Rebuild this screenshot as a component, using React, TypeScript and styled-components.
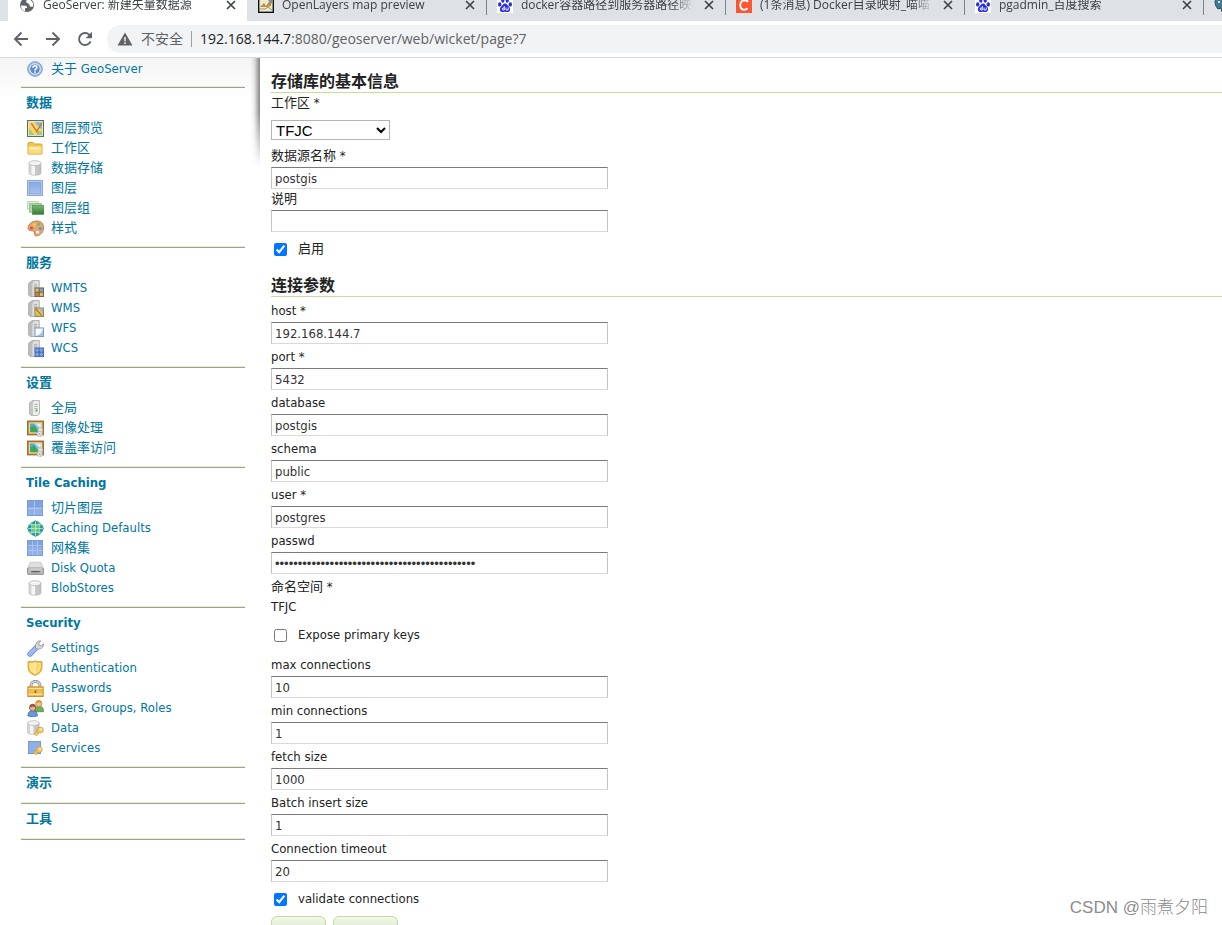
import React, { ReactNode, useId } from "react";
import styled, { createGlobalStyle } from "styled-components";

const pageFont = `"DejaVu Sans Condensed", "Noto Sans CJK SC", sans-serif`;
const chromeFont = `"Open Sans", "Noto Sans CJK SC", sans-serif`;

const GlobalStyle = createGlobalStyle`
  *, *::before, *::after { box-sizing: border-box; }
  body { margin: 0; background: #fff; }
`;

const Window = styled.div`
  position: relative;
  display: flex;
  flex-direction: column;
  height: 100vh;
  overflow: hidden;
  font: 13px/20px ${pageFont};
  color: #222;
`;

/* ---------- browser frame ---------- */

const TabStrip = styled.div`
  display: flex;
  align-items: flex-end;
  flex: none;
  height: 21px;
  padding-left: 8px;
  overflow: hidden;
  background: #dee1e6;
`;

const Tab = styled.div<{ $active?: boolean; $divided?: boolean }>`
  position: relative;
  display: flex;
  align-items: center;
  gap: 8px;
  flex: 0 0 239px;
  min-width: 0;
  height: 32px;
  padding: 0 8px 0 11px;
  background: ${(p) => (p.$active ? "#fff" : "transparent")};
  font: 12px/20px ${chromeFont};
  color: #3c4043;

  &::before {
    content: "";
    position: absolute;
    left: 0;
    top: 6px;
    width: 1px;
    height: 20px;
    background: ${(p) => (p.$divided ? "#808387" : "transparent")};
  }

  svg {
    flex: none;
  }
`;

const TabTitle = styled.span`
  flex: 1;
  min-width: 0;
  overflow: hidden;
  white-space: nowrap;
  mask-image: linear-gradient(90deg, #000 88%, transparent);
`;

const TabClose = styled.button`
  display: flex;
  align-items: center;
  justify-content: center;
  width: 16px;
  height: 16px;
  padding: 0;
  border: 0;
  background: none;
  color: #3c4043;
`;

const Toolbar = styled.div`
  display: flex;
  align-items: center;
  flex: none;
  height: 37px;
  padding-left: 13px;
  gap: 16px;
  background: #fff;
  border-bottom: 1px solid #d9dadc;
`;

const NavButton = styled.button`
  display: flex;
  width: 16px;
  height: 16px;
  padding: 0;
  border: 0;
  background: none;
  color: #5f6368;
`;

const AddressBar = styled.div`
  display: flex;
  align-items: center;
  flex: 1;
  height: 28px;
  margin-left: -2px;
  padding-left: 10px;
  gap: 8px;
  border-radius: 14px 0 0 14px;
  background: #f1f3f4;
  font: 14px/20px ${chromeFont};
  color: #5f6368;
  white-space: nowrap;
`;

const AddressDivider = styled.span`
  width: 1px;
  height: 16px;
  background: #9aa0a6;
`;

const Host = styled.span`
  color: #202124;
`;

/* ---------- page ---------- */

const Page = styled.div`
  display: flex;
  flex: 1;
  min-height: 0;
  background: linear-gradient(#f4f4f4, #fff 40px);
`;

const Sidebar = styled.nav`
  position: relative;
  flex: none;
  width: 260px;
  padding: 0 15px 0 21px;

  &::after {
    content: "";
    position: absolute;
    top: 0;
    right: 0;
    width: 10px;
    height: 108px;
    background: linear-gradient(90deg, transparent, #0001 40%, #0007);
    mask-image: linear-gradient(#000 50%, transparent);
  }
`;

const Section = styled.section<{ $collapsed?: boolean }>`
  padding: 5px 5px ${(p) => (p.$collapsed ? 10 : 9)}px;
  border-bottom: 1px solid #99a389;
  box-shadow: inset 0 -1px #e4efd6;
`;

const IntroSection = styled(Section)`
  padding-top: 1px;
  padding-bottom: 8px;
`;

const SectionTitle = styled.h2`
  margin: 0;
  font: bold 13px/20px ${pageFont};
  color: #0076a1;
`;

const Menu = styled.ul`
  margin: 0;
  padding: 5px 0 0;
  list-style: none;
`;

const IntroMenu = styled(Menu)`
  padding: 0;
`;

const MenuLink = styled.a`
  display: flex;
  align-items: center;
  gap: 7px;
  height: 20px;
  color: #0076a1;
  text-decoration: none;
  white-space: nowrap;
`;

const Main = styled.main`
  flex: 1;
  min-width: 0;
  padding: 4px 0 0 11px;
  background: #fff;
`;

const Legend = styled.h3`
  margin: 0;
  padding-top: 10px;
  border-bottom: 1px solid #c3df9b;
  font: bold 16px/20px ${pageFont};
  color: #222;
`;

const Field = styled.div<{ $gap?: number }>`
  display: flex;
  flex-direction: column;
  align-items: flex-start;
  padding-top: ${(p) => p.$gap ?? 3}px;
`;

const TextInput = styled.input`
  width: 337px;
  height: 22px;
  margin: 1px 0 0;
  padding: 0 3px;
  border: 1px solid #c4c4c4;
  border-top-color: #7a7a7a;
  border-bottom-color: #d9d9d9;
  background: #fff;
  font: 13px/20px ${pageFont};
  color: #333;

  &[type="password"] {
    font-family: "Liberation Sans", sans-serif;
  }
`;

const Select = styled.select`
  width: 119px;
  height: 20px;
  margin: 7px 0 0;
  padding: 0;
  border: 1px solid #b4b4b4;
  background: #fff;
  font: 15px "Liberation Sans", sans-serif;
  color: #000;
`;

const CheckRow = styled.div`
  display: flex;
  align-items: center;
  height: 34px;
  gap: 11px;
  padding-left: 3px;
`;

const CheckBox = styled.input`
  width: 13px;
  height: 13px;
  margin: 0;
  accent-color: #0075ff;
`;

const Value = styled.div`
  margin-bottom: 1px;
`;

const Actions = styled.div`
  display: flex;
  gap: 7px;
`;

const ActionButton = styled.button<{ $wide?: boolean }>`
  width: ${(p) => (p.$wide ? 65 : 55)}px;
  height: 26px;
  border: 1px solid #c0dc98;
  border-radius: 6px;
  background: linear-gradient(#f3f8ec, #c8e0a8);
`;

const Watermark = styled.div`
  position: absolute;
  right: 14px;
  bottom: 5px;
  font: 17px/24px "Liberation Sans", "Noto Sans CJK SC", sans-serif;
  font-weight: 300;
  color: #8c8c8c;
`;

/* ---------- icons ---------- */

const Svg = ({ children, size = 16 }: { children: ReactNode; size?: number }) => (
  <svg width={size} height={size} viewBox="0 0 16 16" aria-hidden="true">
    {children}
  </svg>
);

const MenuIconBox = styled.span`
  display: flex;
  flex: none;
  justify-content: center;
  width: 18px;
`;

const Gradient = ({ id, from, to, flat }: { id: string; from: string; to: string; flat?: boolean }) => (
  <linearGradient id={id} x1="0" y1="0" x2={flat ? "1" : "0"} y2={flat ? "0" : "1"}>
    <stop offset="0" stopColor={from} />
    <stop offset="1" stopColor={to} />
  </linearGradient>
);

const HelpIcon = () => (
  <Svg>
    <circle cx="8" cy="8" r="7.3" fill="#a9c3e6" stroke="#7c9cc8" />
    <circle cx="8" cy="8" r="5.2" fill="#5f8ac4" stroke="#dde9f7" />
    <path d="M6 6.7C6 4.2 10 4.2 10 6.5c0 1.500-2 1.400-2 3" fill="none" stroke="#fff" strokeWidth="1.600" />
    <rect x="7.200" y="10.300" width="1.600" height="1.500" fill="#fff" />
  </Svg>
);

const PreviewIcon = () => (
  <Svg size={17}>
    <rect x=".5" y=".5" width="15" height="15" fill="#e9edd8" stroke="#5f6f55" />
    <rect x="2" y="2" width="12" height="12" fill="#f4d66c" />
    <path d="M7 2h7v7z" fill="#7fb8e8" />
    <path d="M2 8l5 6H2zM10 10l4 1v3h-5z" fill="#9ccf74" />
    <path d="M4 3l6 9M14 3l-5 8" stroke="#d9742b" strokeWidth="1.300" fill="none" />
  </Svg>
);

const FolderIcon = () => (
  <Svg>
    <path d="M1 14V3.500Q1 2.500 2 2.500h4l1.500 1.500H14q1 0 1 1V14z" fill="#f3c64b" stroke="#d9a62c" />
    <path d="M1.500 6.500h13v7h-13z" fill="#fbe59a" />
    <path d="M4 8.500h8M3 11.500h10" stroke="#fff6cf" />
    <path d="M1.500 10h13v3.500h-13z" fill="#f6d05f" opacity=".6" />
  </Svg>
);

const Cylinder = () => {
  const id = useId();
  return (
    <>
      <Gradient id={id} from="#d9d9d9" to="#bdbdbd" flat />
      <path d="M2 3v10c0 3 12 3 12 0V3z" fill={`url(#${id})`} stroke="#b8b8b8" strokeWidth=".7" />
      <path d="M4.500 5v9.300q2 .7 3.500.7V5z" fill="#f5f5f5" />
      <ellipse cx="8" cy="3.200" rx="6" ry="2.500" fill="#f3f3f3" stroke="#b9b9b9" strokeWidth=".8" />
    </>
  );
};

const StoreIcon = () => (
  <Svg>
    <Cylinder />
  </Svg>
);

const LayerIcon = () => {
  const id = useId();
  return (
    <Svg>
      <Gradient id={id} from="#86a9e2" to="#a8c3ee" />
      <rect x=".5" y=".5" width="15" height="15" fill="#e8effb" stroke="#8ba6d6" />
      <rect x="2" y="2" width="12" height="12" fill={`url(#${id})`} stroke="#7f9fd8" />
    </Svg>
  );
};

const LayersIcon = () => {
  const id = useId();
  return (
    <Svg size={17}>
      <Gradient id={id} from="#7cba74" to="#357a35" />
      <rect x=".5" y="1.500" width="10" height="7" fill="#e4f0e2" stroke="#bcd8b8" />
      <rect x="2.500" y="3.500" width="11" height="8" fill="#b5d9af" stroke="#8dbb88" />
      <rect x="5" y="5" width="11" height="8.500" fill={`url(#${id})`} stroke="#4d8b4b" strokeWidth=".6" />
    </Svg>
  );
};

const PaletteIcon = () => (
  <Svg size={17}>
    <path
      d="M1 8C1 3 6 .5 10.500 1c4 .5 5.500 4 5 7.500-.5 4-4 6.500-7 6.500-2 0-1-2.500-2-4S1 11 1 8z"
      fill="#e2a774"
      stroke="#b9733f"
      strokeWidth=".8"
    />
    <circle cx="4.200" cy="7.500" r="1.500" fill="#e34d3e" />
    <circle cx="6.800" cy="4.300" r="1.500" fill="#f1d04a" />
    <circle cx="11" cy="4" r="1.400" fill="#6fbf5f" />
    <circle cx="12.500" cy="8" r="1.500" fill="#4d9ad6" />
    <circle cx="10" cy="11.500" r="1.300" fill="#fff" />
  </Svg>
);

const ServerBody = () => (
  <>
    <path d="M1.500 3L5 .5h6.500v12L9 15.500H3L1.500 14z" fill="#bcbcbc" stroke="#a2a2a2" strokeWidth=".7" />
    <path d="M5 3.500L6.500 1H11v11l-1.500 3H5z" fill="#dedede" />
    <path d="M6.500 4.500h3M6.500 6.500h3" stroke="#9d9d9d" strokeWidth=".8" />
  </>
);

const ServiceIcon = ({ kind }: { kind: "wmts" | "wms" | "wfs" | "wcs" }) => (
  <Svg size={17}>
    <ServerBody />
    {kind === "wmts" && (
      <>
        <rect x="7" y="7" width="9" height="9" fill="#6c6a58" />
        <path d="M8 8h3v3H8z" fill="#e6c04b" />
        <path d="M12 8h3v3h-3z" fill="#7ba5dd" />
        <path d="M8 12h3v3H8z" fill="#d97c43" />
        <path d="M12 12h3v3h-3z" fill="#e6c04b" />
      </>
    )}
    {kind === "wms" && (
      <>
        <rect x="7.500" y="7.500" width="8" height="8" fill="#edc74e" stroke="#8a8c6c" />
        <path d="M11 8h4v5z" fill="#86bde2" />
        <path d="M8 12l3 3H8z" fill="#8cc46b" />
        <path d="M8 8l6 7" stroke="#d8642f" strokeWidth="1.200" />
      </>
    )}
    {kind === "wfs" && (
      <>
        <rect x="7.500" y="7.500" width="8" height="8" fill="#fff" stroke="#7b99d0" />
        <path d="M15 8v7H8q6-1 7-7z" fill="#a4bfeb" />
      </>
    )}
    {kind === "wcs" && (
      <>
        <rect x="7" y="7" width="9" height="9" fill="#4870bd" />
        <path d="M8 9.500h7M8 13.500h7M9.500 8v7M13.500 8v7" stroke="#a8c2f0" strokeDasharray="1 1" strokeWidth="1.300" />
      </>
    )}
  </Svg>
);

const GlobalIcon = () => (
  <Svg>
    <path d="M2.500 3L5 .5h7.500v13L10.500 15.500H4L2.500 14z" fill="#c6c6c6" stroke="#a8a8a8" strokeWidth=".7" />
    <path d="M6 3l1-2h5v12l-1.500 2H6z" fill="#ececec" />
    <path d="M7.500 4.500h3M7.500 6.500h3M7.500 8.500h3" stroke="#a2a2a2" strokeWidth=".8" />
    <rect x="8.500" y="9.500" width="2" height="2" fill="#58ac48" />
  </Svg>
);

const ImageIcon = () => (
  <Svg size={17}>
    <rect x=".8" y="1.300" width="14.400" height="12.400" fill="#efd6a3" stroke="#a86f28" strokeWidth="1.600" />
    <rect x="3" y="3.500" width="10" height="8" fill="#7cc5ee" />
    <path d="M3 3.500h3l6 8H3z" fill="#3da653" />
    <path d="M3 3.500h4l-2 3H3z" fill="#5aa6e0" />
    <path d="M8 3.500h5v5z" fill="#d9effa" />
    <circle cx="12.500" cy="9.500" r="2.200" fill="#e6e6e6" stroke="#b5b5b5" strokeWidth="1.100" strokeDasharray="1.500 .6" />
    <circle cx="12" cy="13" r="2.400" fill="#ededed" stroke="#b0b0b0" strokeWidth="1.100" strokeDasharray="1.500 .6" />
    <circle cx="12" cy="13" r=".8" fill="#999" />
  </Svg>
);

const GridIcon = ({ cells }: { cells: 2 | 3 }) => (
  <Svg>
    <rect width="16" height="16" fill="#8fb0e8" />
    <path d="M0 0h16v7H0z" fill="#7599dc" opacity=".6" />
    <path d={cells === 2 ? "M7.500 1v14M1 8.500h14" : "M5.500 1v14M10.500 1v14M1 5.500h14M1 10.500h14"} stroke="#abc4f0" />
    <rect x=".5" y=".5" width="15" height="15" fill="none" stroke="#7b9bd9" />
  </Svg>
);

const GlobeGridIcon = () => (
  <Svg size={17}>
    <path d="M8 .3l3.500 1.700 3 3 1.300 3-1.300 3-3 3L8 15.700 4.500 14l-3-3L.2 8l1.300-3 3-3z" fill="#2a9d95" />
    <path d="M5 4h6v8H5z" fill="#8ed66e" opacity=".7" />
    <path d="M8 1v14M1 8h14M2.500 4.500h11M2.500 11.500h11M4.500 2.500v11M11.500 2.500v11" stroke="#c7f0dc" strokeWidth=".7" />
  </Svg>
);

const DiskIcon = () => (
  <Svg size={17}>
    <path d="M3 2h10l2.500 6H.5z" fill="#dedede" stroke="#bbb" strokeWidth=".6" />
    <rect x=".5" y="7.500" width="15" height="6" rx="1" fill="#bababa" stroke="#9a9a9a" />
    <path d="M4 11h8" stroke="#666" strokeWidth="1.300" />
    <path d="M2 8.500h12" stroke="#e1e1e1" />
  </Svg>
);

const WrenchIcon = () => (
  <Svg size={17}>
    <path d="M2.800 13.200l6-6" stroke="#6b8dcb" strokeWidth="5" strokeLinecap="round" />
    <path d="M2.800 13.200l6-6" stroke="#9ebaf0" strokeWidth="3.400" strokeLinecap="round" />
    <path d="M8 7.500C7.300 4 9.500.5 13 .8L11 3l.5 2 2 .5 2-2c.3 3.500-3 5.500-6 5z" fill="#d9d9d9" stroke="#8c8c8c" strokeWidth=".8" />
  </Svg>
);

const ShieldIcon = () => (
  <Svg>
    <path d="M8 .7l2 1 5-.2v6q0 5.500-7 8-7-2.500-7-8v-6l5 .2z" fill="#f0bd3d" stroke="#d69b26" strokeWidth=".8" />
    <path d="M8 2.700l1.500.8h3.700V7.500q0 4-5.200 6.200z" fill="#f8d768" stroke="#fff0b2" strokeWidth=".8" />
    <path d="M8 2.700l-1.500.8H2.800V7.500q0 4 5.200 6.200z" fill="#fae489" stroke="#fff0b2" strokeWidth=".8" />
  </Svg>
);

const LockIcon = () => (
  <Svg size={17}>
    <path d="M3.800 8V5C3.800 .3 12.200 .3 12.200 5V8" fill="none" stroke="#8f8f8f" strokeWidth="2.800" />
    <path d="M3.800 8V5C3.800 .3 12.200 .3 12.200 5V8" fill="none" stroke="#d5d5d5" strokeWidth="1.300" />
    <rect x=".8" y="6.500" width="14.400" height="9" fill="#f0bc4c" stroke="#cb8f25" />
    <path d="M1.500 8h13M1.500 13.500h13" stroke="#fae2a0" />
    <rect x="7.200" y="9.800" width="1.600" height="2.400" fill="#8f6014" />
  </Svg>
);

const UsersIcon = () => (
  <Svg size={17}>
    <path d="M7.500 10q0-4 4-4t4 4v1h-8z" fill="#68b258" stroke="#418d38" strokeWidth=".7" />
    <circle cx="11" cy="3.500" r="2.900" fill="#f0c28f" stroke="#c08334" strokeWidth=".8" />
    <path d="M8 3q1-3.500 4-2.700 2.500.7 2 3.200L12 2z" fill="#d9932e" />
    <path d="M.8 15q0-5 4.500-5t4.500 5q-4.500 1.500-9 0z" fill="#6398e3" stroke="#3c68b5" strokeWidth=".7" />
    <circle cx="5.300" cy="7.500" r="2.900" fill="#e9b187" stroke="#8f5638" strokeWidth=".8" />
    <path d="M2.300 7q0-3.500 3-3.500t3 3.500L6 6z" fill="#98563c" />
  </Svg>
);

const Key = () => (
  <>
    <path d="M11.800 9.500L7.500 14" stroke="#cf9a3a" strokeWidth="3.400" />
    <path d="M11.800 9.500L7.500 14" stroke="#f2c451" strokeWidth="2.300" />
    <circle cx="12.500" cy="9.500" r="2.800" fill="#f6cf62" stroke="#cf9a3a" strokeWidth=".7" />
    <circle cx="13.200" cy="8.800" r=".8" fill="#fff" />
  </>
);

const DataKeyIcon = () => (
  <Svg size={17}>
    <g transform="translate(-1.200 0) scale(.9)">
      <Cylinder />
    </g>
    <Key />
  </Svg>
);

const ServiceKeyIcon = () => (
  <Svg>
    <rect x="1.500" y="1.500" width="12" height="12" fill="#8fafe6" stroke="#7897d4" />
    <Key />
  </Svg>
);

const CloseIcon = () => (
  <svg width="10" height="10" viewBox="0 0 10 10" aria-hidden="true">
    <path d="M1 1l8 8M9 1L1 9" stroke="currentColor" strokeWidth="1.600" />
  </svg>
);

const EarthFavicon = () => (
  <Svg>
    <circle cx="8" cy="8" r="7" fill="#5f6368" />
    <path d="M2 8.500l4.500.2q2 .3 1.500 2l-2 .5v3Q2 13 2 8.500zM8.500 2q-2 2.500-1 3.500l2.500 1.500 1 2.500 2.500.5Q15 7 13 4.500 11 2 8.500 2z" fill="#fff" />
  </Svg>
);

const MapFavicon = () => (
  <Svg>
    <rect x=".7" y=".7" width="14.600" height="14.600" fill="#efe8cc" stroke="#111" strokeWidth="1.400" />
    <path d="M2 10l4-4 2 3 5-7v7l-4 1z" fill="#c28d3a" />
    <path d="M10 3l4-1v5z" fill="#7b8da3" />
    <path d="M2 12h5l3-2 4 3" fill="none" stroke="#8f9a83" />
  </Svg>
);

const BaiduFavicon = () => (
  <Svg>
    <rect width="16" height="16" fill="#fff" />
    <g fill="#2b2fdc">
      <ellipse cx="2.700" cy="7.400" rx="1.700" ry="2.200" />
      <ellipse cx="5.800" cy="3.400" rx="1.600" ry="2.300" />
      <ellipse cx="10.200" cy="3.400" rx="1.600" ry="2.300" />
      <ellipse cx="13.300" cy="7.400" rx="1.700" ry="2.200" />
      <path d="M8 6.500c2 0 2.500 2 4 3.300 1.700 1.500 1.500 4.900-1 5.200-1.200.1-2-.3-3-.3s-1.800.4-3 .3c-2.500-.3-2.700-3.700-1-5.200C5.500 8.500 6 6.500 8 6.500z" />
    </g>
    <path d="M7.300 9v4H5.700q-1.200-1 0-2h1.600M9 10.500v2.500h2.200v-2.500" fill="none" stroke="#fff" strokeWidth=".9" />
  </Svg>
);

const CsdnFavicon = () => (
  <Svg>
    <rect width="16" height="16" fill="#fc5531" />
    <path d="M12 5q-1-1.700-3.500-1.700Q4.500 3.500 4.200 8q0 4.700 4 4.700 2.300 0 3.300-1.500" fill="none" stroke="#fff" strokeWidth="2" />
  </Svg>
);

const ElephantFavicon = () => (
  <Svg>
    <path d="M1 5q0-4 6-4t8 4-1 7l-2-1-1 4H8l-1-4-3 1Q1 9 1 5z" fill="#447a8f" stroke="#29505f" />
    <circle cx="5" cy="5" r="1" fill="#fff" />
  </Svg>
);

const BackIcon = () => (
  <Svg>
    <path d="M15 8H2M8.500 1.500L2 8l6.500 6.500" fill="none" stroke="currentColor" strokeWidth="1.900" />
  </Svg>
);

const ForwardIcon = () => (
  <Svg>
    <path d="M1 8h13M7.500 1.500L14 8l-6.500 6.500" fill="none" stroke="currentColor" strokeWidth="1.900" />
  </Svg>
);

const ReloadIcon = () => (
  <Svg>
    <path d="M13.600 10.300A6 6 0 1 1 12.300 3.800L14 5.500" fill="none" stroke="currentColor" strokeWidth="1.900" />
    <path d="M15 .8v6.400H8.600z" fill="currentColor" />
  </Svg>
);

const WarningIcon = () => (
  <Svg>
    <path d="M8 1.500L15.500 14.500H.5z" fill="#5f6368" />
    <path d="M8 6v4.200M8 11.300V13" stroke="#f1f3f4" strokeWidth="1.500" />
  </Svg>
);

/* ---------- data ---------- */

type Entry = [icon: ReactNode, label: string];

const sections: { title: string; items: Entry[] }[] = [
  {
    title: "数据",
    items: [
      [<PreviewIcon />, "图层预览"],
      [<FolderIcon />, "工作区"],
      [<StoreIcon />, "数据存储"],
      [<LayerIcon />, "图层"],
      [<LayersIcon />, "图层组"],
      [<PaletteIcon />, "样式"],
    ],
  },
  {
    title: "服务",
    items: [
      [<ServiceIcon kind="wmts" />, "WMTS"],
      [<ServiceIcon kind="wms" />, "WMS"],
      [<ServiceIcon kind="wfs" />, "WFS"],
      [<ServiceIcon kind="wcs" />, "WCS"],
    ],
  },
  {
    title: "设置",
    items: [
      [<GlobalIcon />, "全局"],
      [<ImageIcon />, "图像处理"],
      [<ImageIcon />, "覆盖率访问"],
    ],
  },
  {
    title: "Tile Caching",
    items: [
      [<GridIcon cells={2} />, "切片图层"],
      [<GlobeGridIcon />, "Caching Defaults"],
      [<GridIcon cells={3} />, "网格集"],
      [<DiskIcon />, "Disk Quota"],
      [<StoreIcon />, "BlobStores"],
    ],
  },
  {
    title: "Security",
    items: [
      [<WrenchIcon />, "Settings"],
      [<ShieldIcon />, "Authentication"],
      [<LockIcon />, "Passwords"],
      [<UsersIcon />, "Users, Groups, Roles"],
      [<DataKeyIcon />, "Data"],
      [<ServiceKeyIcon />, "Services"],
    ],
  },
  { title: "演示", items: [] },
  { title: "工具", items: [] },
];

const tabs: { icon: ReactNode; title: string }[] = [
  { icon: <EarthFavicon />, title: "GeoServer: 新建矢量数据源" },
  { icon: <MapFavicon />, title: "OpenLayers map preview" },
  { icon: <BaiduFavicon />, title: "docker容器路径到服务器路径映射" },
  { icon: <CsdnFavicon />, title: "(1条消息) Docker目录映射_喵喵" },
  { icon: <BaiduFavicon />, title: "pgadmin_百度搜索" },
  { icon: <ElephantFavicon />, title: "" },
];

const TextField = ({ label, value, gap, type = "text" }: { label: string; value: string; gap?: number; type?: string }) => {
  const id = useId();
  return (
    <Field $gap={gap}>
      <label htmlFor={id}>{label}</label>
      <TextInput id={id} type={type} defaultValue={value} />
    </Field>
  );
};

const CheckField = ({ label, checked }: { label: string; checked?: boolean }) => {
  const id = useId();
  return (
    <CheckRow>
      <CheckBox id={id} type="checkbox" defaultChecked={checked} />
      <label htmlFor={id}>{label}</label>
    </CheckRow>
  );
};

const MenuItem = ({ icon, label }: { icon: ReactNode; label: string }) => (
  <li>
    <MenuLink href="#">
      <MenuIconBox>{icon}</MenuIconBox>
      {label}
    </MenuLink>
  </li>
);

export default function App() {
  return (
    <Window>
      <GlobalStyle />
      <TabStrip>
        {tabs.map((tab, i) => (
          <Tab key={i} $active={i === 0} $divided={i > 1}>
            {tab.icon}
            <TabTitle>{tab.title}</TabTitle>
            <TabClose type="button">
              <CloseIcon />
            </TabClose>
          </Tab>
        ))}
      </TabStrip>
      <Toolbar>
        <NavButton type="button"><BackIcon /></NavButton>
        <NavButton type="button"><ForwardIcon /></NavButton>
        <NavButton type="button"><ReloadIcon /></NavButton>
        <AddressBar>
          <WarningIcon />
          <span>不安全</span>
          <AddressDivider />
          <span>
            <Host>192.168.144.7</Host>:8080/geoserver/web/wicket/page?7
          </span>
        </AddressBar>
      </Toolbar>
      <Page>
        <Sidebar>
          <IntroSection>
            <IntroMenu>
              <MenuItem icon={<HelpIcon />} label="关于 GeoServer" />
            </IntroMenu>
          </IntroSection>
          {sections.map((section) => (
            <Section key={section.title} $collapsed={section.items.length === 0}>
              <SectionTitle>{section.title}</SectionTitle>
              {section.items.length > 0 && (
                <Menu>
                  {section.items.map(([icon, label]) => (
                    <MenuItem key={label} icon={icon} label={label} />
                  ))}
                </Menu>
              )}
            </Section>
          ))}
        </Sidebar>
        <Main>
          <form>
            <Legend>存储库的基本信息</Legend>
            <Field $gap={0}>
              <label htmlFor="workspace">工作区 *</label>
              <Select id="workspace" defaultValue="TFJC">
                <option>TFJC</option>
              </Select>
            </Field>
            <TextField label="数据源名称 *" value="postgis" gap={6} />
            <TextField label="说明" value="" gap={0} />
            <CheckField label="启用" checked />
            <Legend>连接参数</Legend>
            <TextField label="host *" value="192.168.144.7" gap={4} />
            <TextField label="port *" value="5432" />
            <TextField label="database" value="postgis" />
            <TextField label="schema" value="public" />
            <TextField label="user *" value="postgres" />
            <TextField label="passwd" value={"x".repeat(44)} type="password" />
            <Field>
              <span>命名空间 *</span>
              <Value>TFJC</Value>
            </Field>
            <CheckField label="Expose primary keys" />
            <TextField label="max connections" value="10" />
            <TextField label="min connections" value="1" />
            <TextField label="fetch size" value="1000" />
            <TextField label="Batch insert size" value="1" />
            <TextField label="Connection timeout" value="20" />
            <CheckField label="validate connections" checked />
            <Actions>
              <ActionButton type="button" />
              <ActionButton type="button" $wide />
            </Actions>
          </form>
        </Main>
      </Page>
      <Watermark>CSDN @雨煮夕阳</Watermark>
    </Window>
  );
}
